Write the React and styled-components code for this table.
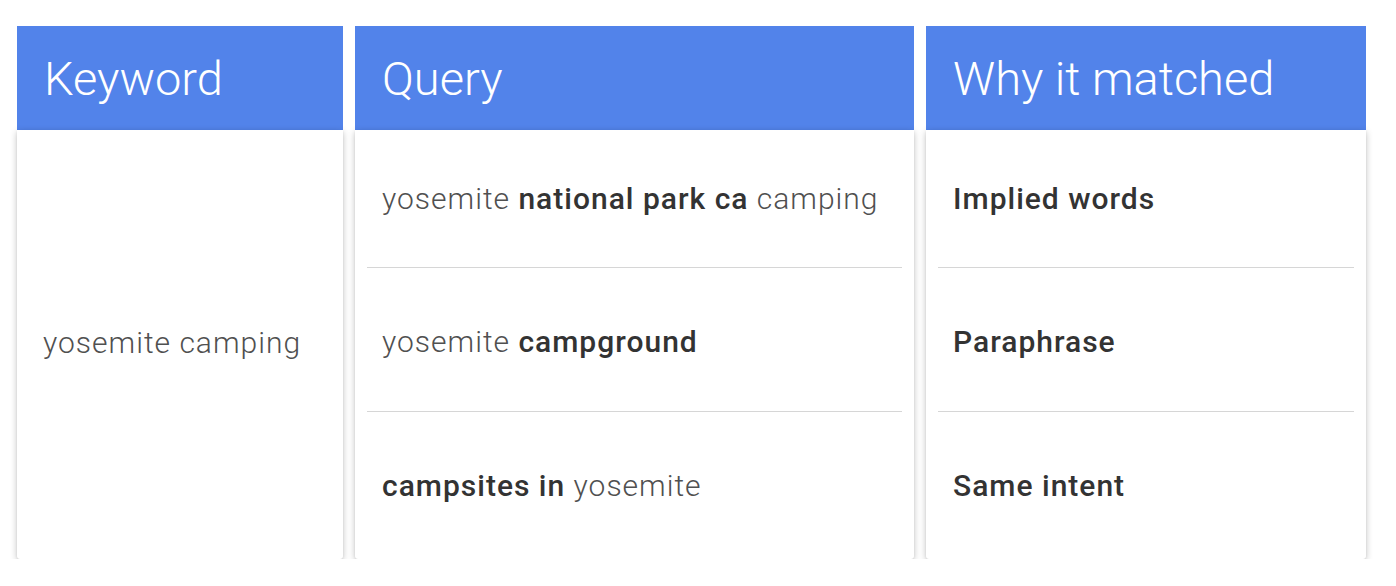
import React from 'react'
import styled, { createGlobalStyle } from 'styled-components'

const GlobalStyle = createGlobalStyle`
  body {
    margin: 0;
    background: #ffffff;
    font-family: Roboto, 'Noto Sans', sans-serif;
  }
`

const rows = [
  { query: [['yosemite ', false], ['national park ca', true], [' camping', false]], why: 'Implied words', shift: 0 },
  { query: [['yosemite ', false], ['campground', true]], why: 'Paraphrase', shift: 4 },
  { query: [['campsites in', true], [' yosemite', false]], why: 'Same intent', shift: 0 },
]

const App = () => {
  return (
    <>
      <GlobalStyle />
      <Table>
        <Column width={326}>
          <Header>Keyword</Header>
          <Body>
            <Single>
              <Light>yosemite camping</Light>
            </Single>
          </Body>
        </Column>
        <Column width={559}>
          <Header>Query</Header>
          <Body>
            <Rows>
              {rows.map((r, i) => (
                <Row key={i} last={i === rows.length - 1} shift={r.shift}>
                  {r.query.map(([t, bold], j) =>
                    bold ? <Bold key={j}>{t}</Bold> : <Light key={j}>{t}</Light>
                  )}
                </Row>
              ))}
            </Rows>
          </Body>
        </Column>
        <Column width={440}>
          <Header>Why it matched</Header>
          <Body>
            <Rows>
              {rows.map((r, i) => (
                <Row key={i} last={i === rows.length - 1} shift={r.shift}>
                  <Bold>{r.why}</Bold>
                </Row>
              ))}
            </Rows>
          </Body>
        </Column>
      </Table>
    </>
  )
}

const Table = styled.div({
  display: 'flex',
  alignItems: 'flex-start',
  gap: '12px',
  padding: '26px 0 0 17px',
})

const Column = styled.div(props => ({
  width: `${props.width}px`,
  flexShrink: 0,
  display: 'flex',
  flexDirection: 'column',
  height: '533px',
}))

const Header = styled.div({
  height: '104px',
  flexShrink: 0,
  background: '#5283EA',
  color: '#ffffff',
  fontFamily: 'Roboto, sans-serif',
  fontWeight: 300,
  fontSize: '47px',
  display: 'flex',
  alignItems: 'center',
  paddingLeft: '27px',
  boxSizing: 'border-box',
})

const Body = styled.div({
  flex: 1,
  background: '#ffffff',
  borderRadius: '0 0 3px 3px',
  boxShadow: '0 2px 7px rgba(0,0,0,0.24), 0 1px 2px rgba(0,0,0,0.08)',
  display: 'flex',
  flexDirection: 'column',
})

const Single = styled.div({
  flex: 1,
  display: 'flex',
  alignItems: 'center',
  paddingLeft: '26px',
  paddingBottom: '4px',
})

const Rows = styled.div({
  flex: 1,
  display: 'grid',
  gridTemplateRows: '138px 144px 1fr',
  padding: '0 12px',
})

const Row = styled.div(props => ({
  display: 'flex',
  alignItems: 'center',
  paddingLeft: '15px',
  paddingTop: `${props.shift}px`,
  paddingBottom: '1px',
  whiteSpace: 'pre',
  borderBottom: props.last ? 'none' : '1px solid #d6d6d6',
}))

const Light = styled.span({
  fontFamily: 'Roboto, sans-serif',
  fontWeight: 300,
  fontSize: '30px',
  letterSpacing: '1px',
  color: '#505050',
})

const Bold = styled.span({
  fontFamily: 'Roboto, sans-serif',
  fontWeight: 500,
  fontSize: '30px',
  letterSpacing: '1px',
  color: '#333333',
})

export default App
